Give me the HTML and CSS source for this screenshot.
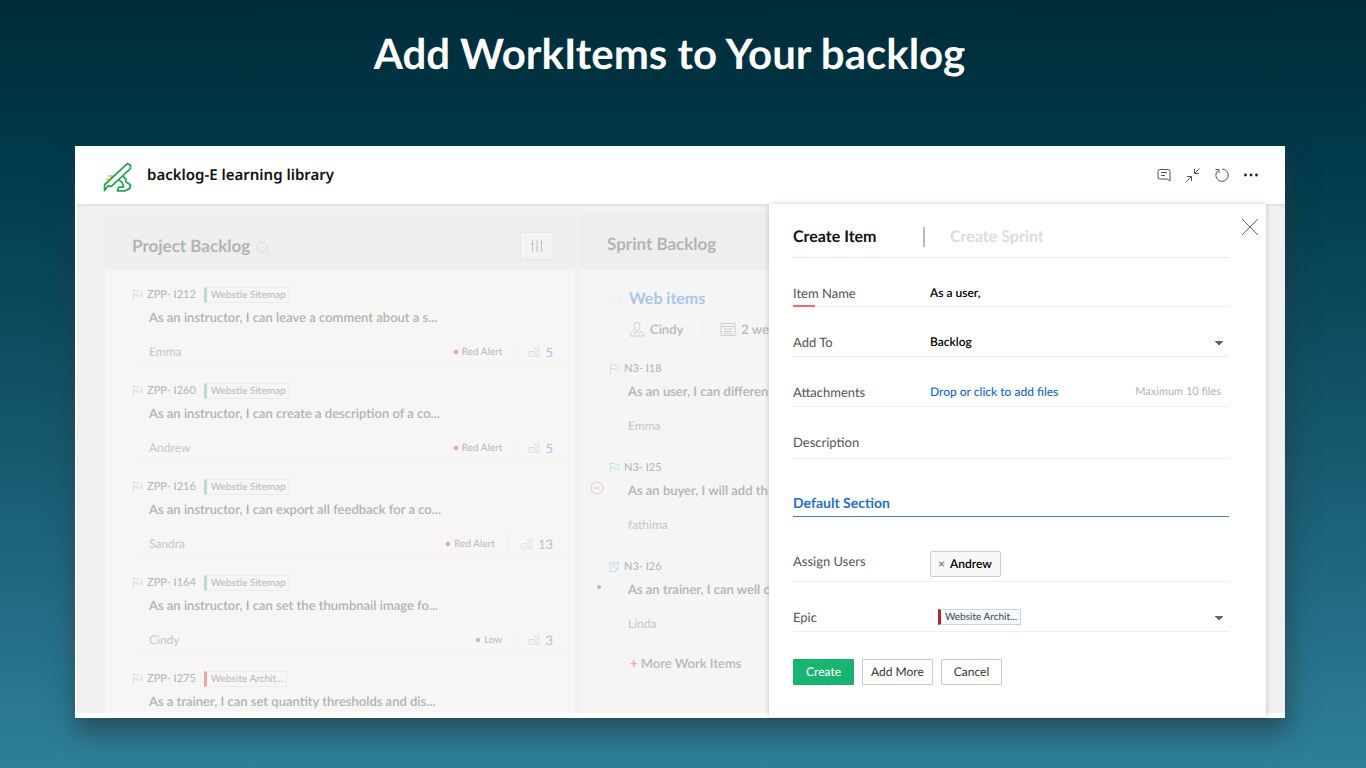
FILE: index.html
```html
<!DOCTYPE html>
<html lang="en">
<head>
<meta charset="utf-8">
<title>Add WorkItems to Your backlog</title>
<link rel="stylesheet" href="styles.css">
</head>
<body>
<svg class="defs" width="0" height="0" aria-hidden="true">
  <symbol id="flag" viewBox="0 0 11 12"><path d="M1.500 0.500v11M1.500 1.500h4.500v1.500h4.500l-1.500 2 1.500 2h-5v-1.500h-4" fill="none" stroke="currentColor"/></symbol>
  <symbol id="thumb" viewBox="0 0 14 12"><path d="M7 2.500h2v8H3q-2 0-2-2.500t3-2.500h3v3H4M9.500 1H12v10H9.500" fill="none" stroke="currentColor"/></symbol>
</svg>
<h1 class="headline">Add WorkItems to Your backlog</h1>
<main class="window">
  <header class="topbar">
    <svg class="logo" viewBox="0 0 28 29" aria-hidden="true" fill="none" stroke-linejoin="round">
      <path d="M3 17h3M5 13.500h4l-2 3" stroke="#f2b84b" stroke-width="1.500"/>
      <path d="M1.500 22L23.500 1.500l3 1.500v3.500L8 23.500l-3-.5L1.500 27.500z" stroke="#23a455" stroke-width="1.700"/>
      <path d="M19 13.500l3 3v2.500l4.500 3-.5 3.500-5 2.500h-7l1-3.500 5-.5-1.500-4-3-2.500" stroke="#23a455" stroke-width="1.700"/>
    </svg>
    <h2 class="board-name">backlog-E learning library</h2>
    <div class="tools">
      <button class="tool" aria-label="Comments"><svg viewBox="0 0 16 16"><path d="M4 2.500h8q2 0 2 2v9.500l-3-2H4q-2 0-2-2v-5.500q0-2 2-2zM5 5.500h6M5 8.500h4"/></svg></button>
      <button class="tool" aria-label="Collapse"><svg viewBox="0 0 16 16"><path d="M14.500 1.500l-5 5M9.500 2v4.500H14M1.500 14.500l5-5M2 9.500h4.500V14"/></svg></button>
      <button class="tool" aria-label="Refresh"><svg viewBox="0 0 16 16"><path d="M4 3.500A6.200 6.200 0 1 0 8 2M1.500 2.500h3.500V6"/></svg></button>
      <button class="tool" aria-label="More"><svg viewBox="0 0 16 16"><g class="dots"><circle cx="2.500" cy="8" r="1.400"/><circle cx="8" cy="8" r="1.400"/><circle cx="13.500" cy="8" r="1.400"/></g></svg></button>
    </div>
  </header>
  <div class="workspace">
    <section class="column project">
      <header class="column-head">
        <h3>Project Backlog</h3>
        <svg class="search" viewBox="0 0 14 14"><circle cx="6" cy="6" r="5"/><path d="M10 10l3.500 3.500"/></svg>
        <button class="filter" aria-label="Filter"><svg viewBox="0 0 14 14"><path d="M2.500 1v12M7 1v12M11.500 1v12M1 5h3M5.500 9h3M10 4h3"/></svg></button>
      </header>
      <article class="card"><div class="card-id"><svg class="flag"><use href="#flag"/></svg>ZPP- I212<span class="tag">Webstie Sitemap</span></div><p>As an instructor, I can leave a comment about a s...</p><footer><span>Emma</span><span class="priority">Red Alert</span><span class="points"><svg><use href="#thumb"/></svg>5</span></footer></article>
      <article class="card"><div class="card-id"><svg class="flag"><use href="#flag"/></svg>ZPP- I260<span class="tag">Webstie Sitemap</span></div><p>As an instructor, I can create a description of a co...</p><footer><span>Andrew</span><span class="priority">Red Alert</span><span class="points"><svg><use href="#thumb"/></svg>5</span></footer></article>
      <article class="card"><div class="card-id"><svg class="flag"><use href="#flag"/></svg>ZPP- I216<span class="tag">Webstie Sitemap</span></div><p>As an instructor, I can export all feedback for a co...</p><footer><span>Sandra</span><span class="priority">Red Alert</span><span class="points"><svg><use href="#thumb"/></svg>13</span></footer></article>
      <article class="card"><div class="card-id"><svg class="flag"><use href="#flag"/></svg>ZPP- I164<span class="tag">Webstie Sitemap</span></div><p>As an instructor, I can set the thumbnail image fo...</p><footer><span>Cindy</span><span class="priority low">Low</span><span class="points"><svg><use href="#thumb"/></svg>3</span></footer></article>
      <article class="card"><div class="card-id"><svg class="flag"><use href="#flag"/></svg>ZPP- I275<span class="tag red">Website Archit...</span></div><p>As a trainer, I can set quantity thresholds and dis...</p></article>
    </section>
    <section class="column sprint">
      <header class="column-head"><h3>Sprint Backlog</h3></header>
      <div class="sprint-info">
        <h4><svg viewBox="0 0 14 14"><circle cx="7" cy="7" r="6"/><path d="M5 6l2 2 2-2"/></svg>Web items</h4>
        <div class="sprint-meta">
          <svg viewBox="0 0 16 16"><path d="M8 1q3 0 3 4t-3 5q-3-1-3-5t3-4zM5.500 10Q1 11 1 15h14q0-4-4.500-5M5 13l3-2 3 2"/></svg><span class="owner">Cindy</span>
          <svg viewBox="0 0 16 16"><path d="M1 2.500h14v12H1zM1 5.500h14M4 8h8M4 10.500h8M4 12.500h8"/></svg><span>2 we</span>
        </div>
      </div>
      <article class="card"><div class="card-id"><svg class="flag"><use href="#flag"/></svg>N3- I18</div><p>As an user, I can differen</p><footer>Emma</footer></article>
      <article class="card"><svg class="mark stop" viewBox="0 0 14 14"><circle cx="7" cy="7" r="6"/><path d="M4 7h6"/></svg><div class="card-id"><svg class="flag"><use href="#flag"/></svg>N3- I25</div><p>As an buyer, I will add th</p><footer>fathima</footer></article>
      <article class="card"><span class="mark dot"></span><div class="card-id"><svg class="flag note" viewBox="0 0 12 12"><path d="M1 1h9v5l-4 5H1zM3 3.500h5M3 6h4M7 11l4-4"/></svg>N3- I26</div><p>As an trainer, I can well c</p><footer>Linda</footer></article>
      <button class="more"><b>+</b> More Work Items</button>
    </section>
    <form class="panel">
      <button class="close" type="button" aria-label="Close"><svg viewBox="0 0 18 18"><path d="M1 1l16 16M17 1L1 17"/></svg></button>
      <nav class="tabs"><button class="tab active" type="button">Create Item</button><button class="tab" type="button">Create Sprint</button></nav>
      <div class="field required"><label for="item">Item Name</label><input id="item" type="text" value="As a user,"></div>
      <div class="field"><label for="add">Add To</label><select id="add"><option>Backlog</option></select></div>
      <div class="field"><span>Attachments</span><div class="attach"><a href="#files">Drop or click to add files</a><small>Maximum 10 files</small></div></div>
      <div class="field description"><label for="desc">Description</label><input id="desc" type="text"></div>
      <h3 class="section">Default Section</h3>
      <div class="field users"><span>Assign Users</span><div><span class="chip"><button type="button" aria-label="Remove Andrew">×</button>Andrew</span></div></div>
      <div class="field"><span>Epic</span><button class="epic" type="button"><span class="tag red">Website Archit...</span></button></div>
      <div class="actions"><button class="btn primary" type="button">Create</button><button class="btn" type="button">Add More</button><button class="btn" type="button">Cancel</button></div>
    </form>
  </div>
</main>
</body>
</html>
```
FILE: styles.css
```css
* { box-sizing: border-box; margin: 0; }
body {
  display: flex;
  flex-direction: column;
  min-height: 100vh;
  padding: 0 81px 50px 75px;
  font: 13px/20px Lato, "Open Sans", sans-serif;
  text-rendering: geometricPrecision;
  background: linear-gradient(#002b38, #003b4b 22%, #175a70 60%, #2e7f9a);
}
button, input, select { padding: 0; border: 0; background: none; font: inherit; color: inherit; text-rendering: inherit; }
svg { flex: none; }
.defs { position: absolute; }

.headline {
  padding: 29px 21px 68px 0;
  font-size: 42px;
  line-height: 49px;
  font-weight: 700;
  text-align: center;
  color: #fff;
}

.window {
  display: flex;
  flex: 1;
  flex-direction: column;
  background: #fff;
  box-shadow: 2px 14px 24px rgba(40, 52, 62, .65);
}
.topbar {
  display: flex;
  align-items: center;
  height: 58px;
  padding: 0 26px 1px 28px;
}
.logo { width: 29px; height: 30px; margin-top: 5px; }
.board-name {
  margin-left: 15px;
  font: 600 15px/24px "Noto Sans", sans-serif;
  color: #111;
}
.tools { display: flex; gap: 13px; margin-left: auto; }
.tool { width: 16px; height: 16px; }
.tool svg { display: block; width: 16px; height: 16px; fill: none; stroke: #555; }
.tool .dots { fill: #222; stroke: none; }

.workspace {
  position: relative;
  display: flex;
  flex: 1 0 0;
  gap: 5px;
  min-height: 513px;
  padding: 10px 0 0 28px;
  border: solid #fff;
  border-width: 0 0 5px 2px;
  background: #f2f1f1;
  box-shadow: inset 0 2px 2px #e2e2e2;
}
.column { overflow: hidden; height: 499px; color: #b8b8b8; }
.project { flex: 0 0 470px; background: #f7f6f4; }
.sprint { flex: 1; margin-right: 516px; background: #f5f5f5; }
.column-head {
  display: flex;
  align-items: center;
  height: 57px;
  padding: 7px 21px 0 27px;
  background: #f0eeef;
}
.column-head h3 { font-size: 17px; font-weight: 700; color: #b5b4b4; }
.search { width: 14px; height: 14px; margin: 4px 0 0 6px; fill: none; stroke: #dcdada; }
.filter { display: grid; place-items: center; width: 34px; height: 28px; margin-left: auto; border: 1px solid #e8e6e6; background: #f4f3f3; }
.filter svg { width: 14px; height: 14px; fill: none; stroke: #c4c4c4; }

.card {
  position: relative;
  margin-left: 27px;
  padding: 14px 22px 4px 0;
  border-bottom: 1px solid #f4f3f2;
}
.card-id { display: flex; align-items: center; font-size: 11px; font-weight: 500; white-space: nowrap; }
.flag { width: 11px; height: 12px; margin-right: 4px; color: #c8e8da; }
.card p { margin: 1px 0 14px 17px; font-size: 13px; line-height: 22px; font-weight: 600; white-space: nowrap; color: #b2b2b2; }
.card footer { display: flex; margin-left: 17px; font-size: 12px; color: #c6c6c6; }
.tag {
  display: inline-block;
  margin-left: 8px;
  padding: 0 3px 0 4px;
  border: 1px solid #e8ecec;
  border-left: 3px solid #b4dcd8;
  font-size: 10px;
  line-height: 14px;
  color: #bcbcbc;
}
.tag.red { border-left-color: #eea6ac; }
.priority { margin-left: auto; font-size: 10px; color: #b8b8b8; }
.priority::before { content: ""; display: inline-block; width: 4px; height: 4px; margin: 0 4px 1px 0; border-radius: 1px; background: #ee9fae; }
.priority.low::before { background: #9ad3bd; }
.points { display: flex; align-items: center; margin-left: 12px; padding-left: 12px; border-left: 1px solid #efefee; font-size: 13px; line-height: 12px; color: #a9c6ea; }
.points svg { width: 14px; height: 12px; margin-right: 4px; color: #e0e0e0; }

.sprint .column-head { height: 56px; padding-top: 4px; background: #efeeee; }
.sprint .card { margin-left: 29px; padding: 14px 0 7px; }
.sprint .card p { margin-left: 19px; }
.sprint .card footer { margin-left: 19px; }
.sprint-info { height: 75px; padding-top: 19px; border-bottom: 1px solid #f1f1f1; }
.sprint-info h4 { display: flex; align-items: center; padding-left: 28px; font-size: 16px; font-weight: 700; color: #a9c8e8; }
.sprint-info h4 svg { width: 14px; height: 14px; margin-right: 7px; fill: none; stroke: #ececec; }
.sprint-meta { display: flex; align-items: center; margin-top: 10px; padding-left: 49px; white-space: nowrap; font-weight: 600; }
.sprint-meta svg { width: 16px; height: 16px; margin-right: 5px; fill: none; stroke: #d0d0d0; }
.owner { padding-right: 19px; margin-right: 17px; border-right: 1px solid #eee; }
.mark { position: absolute; left: -19px; top: 37px; width: 14px; height: 14px; fill: none; stroke: #f2c4c0; }
.mark.dot { left: -12px; top: 42px; width: 4px; height: 4px; border-radius: 2px; background: #bbb; }
.note { fill: none; stroke: #c4d8ee; }
.more { padding: 11px 0 0 50px; font-weight: 600; }
.more b { color: #eea89f; }

.panel {
  position: absolute;
  top: 0;
  right: 19px;
  bottom: -4px;
  width: 497px;
  padding: 0 37px 0 24px;
  background: #fff;
  box-shadow: 0 0 5px rgba(0, 0, 0, .22);
  color: #555;
}
.close { position: absolute; top: 14px; right: 7px; width: 18px; height: 18px; }
.close svg { display: block; fill: none; stroke: #666; }
.tabs { display: flex; align-items: center; height: 54px; padding-top: 13px; border-bottom: 1px solid #e8e8e8; }
.tab { font-size: 16px; font-weight: 700; color: #dcdce8; }
.tab.active { width: 132px; margin-right: 25px; border-right: 2px solid #bbb; text-align: left; color: #111; }
.field {
  display: grid;
  grid-template-columns: 137px 1fr;
  align-content: end;
  min-height: 50px;
  padding-bottom: 4px;
  border-bottom: 1px solid #eee;
}
.field input, .field select { width: 100%; font-size: 12px; font-weight: 600; color: #000; outline: 0; }
.required { min-height: 49px; padding-bottom: 3px; }
.required label { position: relative; }
.required label::after { content: ""; position: absolute; left: 0; bottom: -4px; width: 22px; height: 2px; background: #ec6a66; }
.field select, .epic {
  height: 20px;
  appearance: none;
  background: linear-gradient(to bottom left, #666 50%, transparent 50%) right 10px top 9px / 4px 5px no-repeat, linear-gradient(to bottom right, #666 50%, transparent 50%) right 6px top 9px / 4px 5px no-repeat;
}
.attach { display: flex; justify-content: space-between; padding-right: 8px; }
.attach a { font-size: 12px; font-weight: 500; color: #1268c9; text-decoration: none; }
.attach small { font-size: 11px; color: #b3b3b3; }
.description { min-height: 52px; padding-bottom: 6px; }
.section { height: 58px; padding-top: 34px; border-bottom: 1px solid #3d82d0; font-size: 14px; font-weight: 700; color: #2470cc; }
.users { min-height: 65px; }
.chip { display: inline-flex; align-items: center; height: 26px; padding: 0 8px 0 7px; border: 1px solid #ccc; border-radius: 2px; background: #f8f8f8; font-size: 12px; font-weight: 600; color: #000; }
.chip button { margin-right: 5px; color: #777; }
.epic { display: flex; align-items: center; }
.epic .tag { border-color: #c6d8e2; border-left-color: #b8202a; background: #f5f9fc; color: #444; }
.actions { display: flex; gap: 8px; padding-top: 27px; }
.btn { height: 26px; padding: 0 8px; border: 1px solid #c8c8c8; border-radius: 1px; font-size: 12px; color: #333; }
.btn.primary, .btn:last-child { padding: 0 12px; }
.btn.primary { border-color: #17b06e; background: #17b472; font-weight: 500; color: #fff; }
```
